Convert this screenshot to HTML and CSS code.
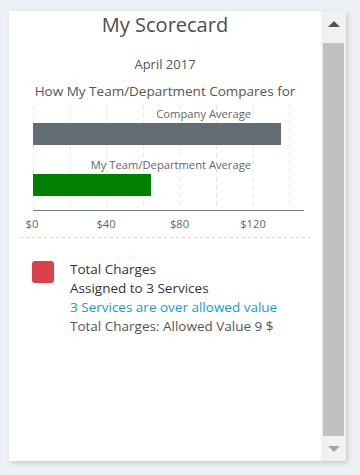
FILE: index.html
```html
<!DOCTYPE html>
<html>
<head>
<meta charset="utf-8">
<link rel="stylesheet" href="styles.css">
</head>
<body>
<div class="card">
  <div class="content">
    <h1 class="title">My Scorecard</h1>
    <div class="period">April 2017</div>
    <div class="subtitle">How My Team/Department Compares for</div>
    <svg class="chart" width="312" height="140" viewBox="0 0 312 140">
      <g class="grid">
        <line x1="24.5" y1="3" x2="24.5" y2="108"/>
        <line x1="61.1" y1="3" x2="61.1" y2="108"/>
        <line x1="97.7" y1="3" x2="97.7" y2="108"/>
        <line x1="134.3" y1="3" x2="134.3" y2="108"/>
        <line x1="170.9" y1="3" x2="170.9" y2="108"/>
        <line x1="207.5" y1="3" x2="207.5" y2="108"/>
        <line x1="244.1" y1="3" x2="244.1" y2="108"/>
        <line x1="280.7" y1="3" x2="280.7" y2="108"/>
      </g>
      <text class="bar-label" x="242" y="16" text-anchor="end">Company Average</text>
      <rect class="bar-company" x="24" y="21" width="248" height="22"/>
      <text class="bar-label" x="242" y="67" text-anchor="end">My Team/Department Average</text>
      <rect class="bar-team" x="24" y="72" width="118" height="22"/>
      <line class="axis" x1="24" y1="108.5" x2="295" y2="108.5"/>
      <text class="tick" x="23" y="126" text-anchor="middle">$0</text>
      <text class="tick" x="97" y="126" text-anchor="middle">$40</text>
      <text class="tick" x="170.5" y="126" text-anchor="middle">$80</text>
      <text class="tick" x="244" y="126" text-anchor="middle">$120</text>
      <line class="sep" x1="11" y1="135.5" x2="301" y2="135.5"/>
    </svg>
    <div class="item">
      <span class="swatch"></span>
      <div class="item-text">
        <div class="strong">Total Charges</div>
        <div class="strong">Assigned to 3 Services</div>
        <div class="link">3 Services are over allowed value</div>
        <div class="plain">Total Charges: Allowed Value 9 $</div>
      </div>
    </div>
  </div>
  <div class="scrollbar">
    <div class="sb-btn"><span class="arrow-up"></span></div>
    <div class="sb-gap"></div>
    <div class="sb-thumb"></div>
    <div class="sb-btn"><span class="arrow-down"></span></div>
  </div>
</div>
</body>
</html>
```

FILE: styles.css
```css
html, body {
  margin: 0;
  padding: 0;
}
body {
  background: #edf0f4;
  font-family: "Open Sans", "Liberation Sans", sans-serif;
  padding: 11px 0 0 9px;
  width: 360px;
  height: 475px;
  box-sizing: border-box;
  overflow: hidden;
}
.card {
  width: 337px;
  height: 450px;
  background: #fff;
  display: flex;
  box-shadow: 2px 2px 5px rgba(0, 0, 0, 0.16);
}
.content {
  width: 312px;
  display: flex;
  flex-direction: column;
}
.title {
  margin: 0;
  font-size: 20px;
  font-weight: 400;
  line-height: 28px;
  color: #4d4d4d;
  text-align: center;
}
.period {
  margin-top: 16px;
  font-size: 13px;
  line-height: 18px;
  color: #555;
  text-align: center;
}
.subtitle {
  margin-top: 9px;
  font-size: 13.5px;
  line-height: 18px;
  color: #555;
  text-align: center;
}
.chart {
  display: block;
  margin-top: 2px;
}
.grid line {
  stroke: #dfe5eb;
  stroke-width: 1;
  stroke-dasharray: 4 4;
}
.bar-company {
  fill: #616c73;
}
.bar-team {
  fill: #008000;
}
.axis {
  stroke: #6f7a82;
  stroke-width: 1.2;
}
.sep {
  stroke: #cfd6de;
  stroke-width: 1;
  stroke-dasharray: 3 3;
}
.bar-label, .tick {
  font-family: "Open Sans", "Liberation Sans", sans-serif;
  font-size: 11.2px;
  fill: #666;
}
.item {
  margin-top: 18px;
  padding-left: 23px;
  display: flex;
  align-items: flex-start;
  gap: 16px;
}
.swatch {
  width: 22px;
  height: 22px;
  margin-top: 1px;
  border-radius: 3px;
  background: #d9414c;
  flex: none;
}
.item-text {
  font-size: 13.5px;
  line-height: 19px;
}
.strong {
  color: #333;
  font-weight: 500;
}
.link {
  color: #1a98d5;
}
.plain {
  color: #555;
}
.scrollbar {
  width: 25px;
  background: #f1f1f1;
  display: flex;
  flex-direction: column;
}
.sb-btn {
  height: 25px;
  display: flex;
  align-items: center;
  justify-content: center;
  flex: none;
}
.sb-gap {
  height: 7px;
  flex: none;
}
.sb-thumb {
  flex: 1;
  margin: 0 2px;
  background: #c1c1c1;
}
.arrow-up {
  width: 0;
  height: 0;
  border-left: 6px solid transparent;
  border-right: 6px solid transparent;
  border-bottom: 6px solid #505050;
}
.arrow-down {
  width: 0;
  height: 0;
  border-left: 6px solid transparent;
  border-right: 6px solid transparent;
  border-top: 6px solid #a3a3a3;
}
```
